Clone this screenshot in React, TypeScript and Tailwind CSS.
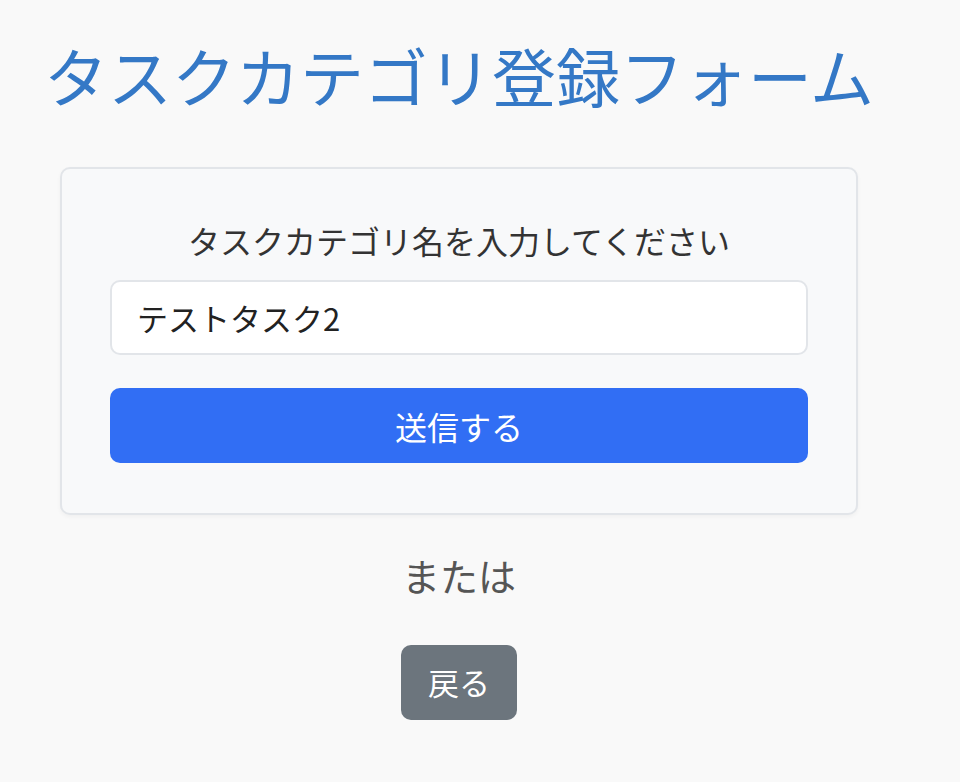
export default function App() {
  return (
    <div
      className="min-h-[782px] bg-[#f9f9f9] pt-[33px]"
      style={{ fontFamily: '"Noto Sans CJK JP", "Noto Sans", sans-serif' }}
    >
      <h1 className="ml-[44px] text-[64px] leading-[82px] text-[#3478c6] font-normal">
        タスクカテゴリ登録フォーム
      </h1>

      <div className="ml-[60px] mt-[52px] w-[798px] rounded-[10px] border-2 border-[#e2e5e9] bg-[#f8f9fa] px-[48px] pt-[48px] pb-[50px] shadow-[0_2px_4px_rgba(0,0,0,0.04)]">
        <p className="text-center text-[32px] leading-[46px] text-[#333]">
          タスクカテゴリ名を入力してください
        </p>
        <input
          defaultValue="テストタスク2"
          className="mt-[17px] block h-[75px] w-full rounded-[10px] border-2 border-[#e2e5e9] bg-white px-[25px] text-[31px] text-[#222] outline-none"
        />
        <button className="mt-[33px] block h-[75px] w-full rounded-[10px] bg-[#316ef4] text-[32px] text-white">
          送信する
        </button>
      </div>

      <p className="mt-[30px] w-[918px] text-center text-[38px] leading-[60px] text-[#555]">
        または
      </p>

      <div className="mt-[40px] flex w-[918px] justify-center">
        <button className="h-[75px] w-[116px] rounded-[10px] bg-[#6c757d] text-[31px] text-white">
          戻る
        </button>
      </div>
    </div>
  )
}
